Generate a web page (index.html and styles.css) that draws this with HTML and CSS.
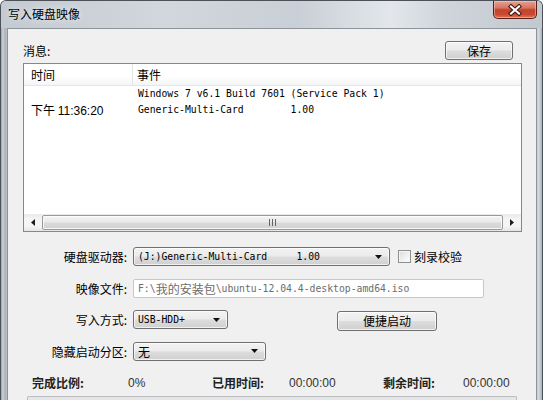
FILE: index.html
```html
<!DOCTYPE html>
<html lang="zh-CN">
<head>
<meta charset="UTF-8" />
<meta name="viewport" content="width=device-width, initial-scale=1" />
<title>写入硬盘映像</title>
<link rel="stylesheet" href="styles.css">
</head>
<body>
<div class="window">
  <div class="titlebar">
    <span class="title">写入硬盘映像</span>
    <div class="close-btn">
      <svg width="16" height="12" viewBox="0 0 16 12">
        <path d="M4 2.5 L12 9.5 M12 2.5 L4 9.5" stroke="#3c1610" stroke-width="4.2" stroke-linecap="square"/>
        <path d="M4 2.5 L12 9.5 M12 2.5 L4 9.5" stroke="#ffffff" stroke-width="2.2" stroke-linecap="square"/>
      </svg>
    </div>
  </div>

  <div class="client">
    <div class="msg-head">
      <span class="label">消息:</span>
      <button class="btn btn-save">保存</button>
    </div>

    <div class="list">
      <div class="list-head">
        <div class="col-time">时间</div>
        <div class="col-event">事件</div>
      </div>
      <div class="list-body">
        <div class="row">
          <div class="col-time"></div>
          <div class="col-event mono">Windows 7 v6.1 Build 7601 (Service Pack 1)</div>
        </div>
        <div class="row">
          <div class="col-time">下午 <span class="time">11:36:20</span></div>
          <div class="col-event mono">Generic-Multi-Card        1.00</div>
        </div>
      </div>
      <div class="hscroll">
        <div class="sb-arrow">
          <svg width="4" height="7" viewBox="0 0 4 7"><path d="M4 0 L0 3.5 L4 7 Z" fill="#1e1e1e"/></svg>
        </div>
        <div class="sb-thumb">
          <svg width="7" height="7" viewBox="0 0 7 7">
            <path d="M0.5 0 V7 M3.5 0 V7 M6.5 0 V7" stroke="#5f6468" stroke-width="1"/>
          </svg>
        </div>
        <div class="sb-arrow">
          <svg width="4" height="7" viewBox="0 0 4 7"><path d="M0 0 L4 3.5 L0 7 Z" fill="#1e1e1e"/></svg>
        </div>
      </div>
    </div>

    <div class="form">
      <div class="form-label">硬盘驱动器:</div>
      <div class="form-field">
        <div class="combo combo-drive">
          <span class="mono combo-text">(J:)Generic-Multi-Card     1.00</span>
          <svg class="combo-arrow" width="7" height="4" viewBox="0 0 7 4"><path d="M0 0 H7 L3.5 4 Z" fill="#111"/></svg>
        </div>
        <span class="checkbox"></span>
        <span class="check-label">刻录校验</span>
      </div>

      <div class="form-label">映像文件:</div>
      <div class="form-field">
        <div class="textbox"><span class="mono">F:\</span><span class="zh">我的安装包</span><span class="mono">\ubuntu-12.04.4-desktop-amd64.iso</span></div>
      </div>

      <div class="form-label">写入方式:</div>
      <div class="form-field">
        <div class="combo combo-mode">
          <span class="mono combo-text">USB-HDD+</span>
          <svg class="combo-arrow" width="7" height="4" viewBox="0 0 7 4"><path d="M0 0 H7 L3.5 4 Z" fill="#111"/></svg>
        </div>
        <button class="btn btn-quick">便捷启动</button>
      </div>

      <div class="form-label">隐藏启动分区:</div>
      <div class="form-field">
        <div class="combo combo-hide">
          <span class="zh combo-text">无</span>
          <svg class="combo-arrow" width="7" height="4" viewBox="0 0 7 4"><path d="M0 0 H7 L3.5 4 Z" fill="#111"/></svg>
        </div>
      </div>
    </div>

    <div class="stats">
      <span class="stat-label">完成比例:</span>
      <span class="stat-value">0%</span>
      <span class="stat-label">已用时间:</span>
      <span class="stat-value">00:00:00</span>
      <span class="stat-label">剩余时间:</span>
      <span class="stat-value">00:00:00</span>
    </div>

    <div class="progress"></div>
  </div>
</div>
</body>
</html>
```

FILE: styles.css
```css
:root {
  --frame-color: #c3cad2;
  --client-bg: #f0f0f0;
  --border-dark: #707070;
  --text-color: #000000;
  --zh-font: "Noto Sans CJK SC", "Noto Sans", sans-serif;
  --mono-font: "DejaVu Sans Mono", "Liberation Mono", monospace;
}
* {
  box-sizing: border-box;
}
body {
  margin: 0;
  width: 543px;
  height: 400px;
  overflow: hidden;
  background: #ffffff;
  font-family: var(--zh-font);
  font-size: 12px;
  color: var(--text-color);
}
.zh {
  font-family: var(--zh-font);
  font-size: 12px;
}
.mono {
  font-family: var(--mono-font);
  font-size: 9.75px;
  white-space: pre;
}
.time {
  font-family: "Liberation Sans", Arial, sans-serif;
  font-size: 12px;
}

/* window frame */
.window {
  height: 400px;
  display: flex;
  flex-direction: column;
  border: 1px solid #4b5157;
  border-bottom: none;
  border-radius: 6px 6px 0 0;
  background: linear-gradient(to right, #9ea5ad 0, #cdd3da 2px, #a9b0b8 4px, #bcc3cb 6px, var(--frame-color) 7px, var(--frame-color) calc(100% - 6px), #d3d8de calc(100% - 3px), #a9b0b8 100%);
  overflow: hidden;
}
.titlebar {
  height: 27px;
  flex: none;
  display: flex;
  align-items: flex-start;
  padding-left: 7px;
  background: linear-gradient(to right, #c4cad1 0%, #d2d7dd 30%, #c9cfd6 55%, #e3e7eb 72%, #d0d5db 82%, #c2c8cf 100%);
}
.title {
  line-height: 26px;
  font-size: 12px;
  text-shadow: 0 0 6px rgba(255, 255, 255, 0.9);
}
.close-btn {
  margin-left: auto;
  margin-right: 5px;
  width: 44px;
  height: 18px;
  display: flex;
  align-items: center;
  justify-content: center;
  border: 1px solid #5e1d14;
  border-top: none;
  border-radius: 0 0 5px 5px;
  background: linear-gradient(#e6a193 0%, #d77561 40%, #c3442c 52%, #c94a31 80%, #dc7a5c 100%);
  box-shadow: inset 0 0 0 1px rgba(255, 220, 210, 0.45);
}

/* client area */
.client {
  flex: 1;
  min-height: 0;
  display: flex;
  flex-direction: column;
  margin: 0 5px 0 6px;
  padding: 12px 14px 0 15px;
  border: 1px solid #8d949b;
  border-bottom: none;
  background: var(--client-bg);
  overflow: hidden;
}
.msg-head {
  height: 19px;
  flex: none;
  display: flex;
  align-items: center;
  justify-content: space-between;
}
.label {
  line-height: 18px;
}
.btn {
  font-family: var(--zh-font);
  font-size: 12px;
  color: var(--text-color);
  padding: 0;
  border: 1px solid var(--border-dark);
  border-radius: 3px;
  background: linear-gradient(#f3f3f3 0%, #ebebeb 48%, #dddddd 52%, #cfcfcf 100%);
  box-shadow: inset 0 0 0 1px rgba(255, 255, 255, 0.7);
  line-height: 16px;
}
.btn-save {
  width: 68px;
  height: 19px;
  margin-right: 9px;
}

/* message list */
.list {
  margin-top: 3px;
  height: 169px;
  flex: none;
  display: flex;
  flex-direction: column;
  border: 1px solid #828790;
  background: #ffffff;
}
.list-head {
  height: 22px;
  flex: none;
  display: flex;
  border-bottom: 1px solid #e3e5e8;
  background: linear-gradient(#ffffff 0%, #ffffff 60%, #f4f5f6 100%);
  line-height: 21px;
}
.list-head .col-time {
  border-right: 1px solid #e3e5e8;
}
.col-time {
  width: 109px;
  flex: none;
  padding-left: 7px;
}
.col-event {
  padding-left: 4px;
}
.list-body {
  flex: 1;
}
.row {
  height: 16px;
  display: flex;
  align-items: center;
  line-height: 16px;
}
.row .col-event {
  padding-left: 5px;
}
.hscroll {
  height: 17px;
  flex: none;
  display: flex;
  align-items: stretch;
  padding: 1px 0;
  background: linear-gradient(#e9e9e9, #f5f5f5 30%, #f5f5f5 70%, #e6e6e6);
}
.sb-arrow {
  width: 18px;
  display: flex;
  align-items: center;
  justify-content: center;
}
.sb-thumb {
  flex: 1;
  display: flex;
  align-items: center;
  justify-content: center;
  border: 1px solid #989898;
  border-radius: 2px;
  background: linear-gradient(#f2f2f2 0%, #eaeaea 45%, #dadada 55%, #d2d2d2 100%);
  box-shadow: inset 0 0 0 1px rgba(255, 255, 255, 0.8);
}

/* form */
.form {
  margin-top: 15px;
  flex: none;
  display: grid;
  grid-template-columns: 104px auto;
  grid-auto-rows: 19px;
  column-gap: 6px;
  row-gap: 12.5px;
}
.form-label {
  text-align: right;
  line-height: 19px;
}
.form-field {
  display: flex;
  align-items: center;
}
.combo {
  height: 19px;
  display: flex;
  align-items: center;
  padding: 0 7px 0 4px;
  border: 1px solid var(--border-dark);
  border-radius: 3px;
  background: linear-gradient(#f3f3f3 0%, #ebebeb 48%, #dddddd 52%, #d0d0d0 100%);
  box-shadow: inset 0 0 0 1px rgba(255, 255, 255, 0.7);
}
.combo-text {
  flex: 1;
  line-height: 17px;
}
.combo-drive {
  width: 257px;
}
.combo-mode {
  width: 95px;
}
.combo-hide {
  width: 133px;
}
.checkbox {
  width: 13px;
  height: 13px;
  margin-left: 8px;
  border: 1px solid #8e8f8f;
  background: linear-gradient(135deg, #dcdcdc, #ffffff);
  box-shadow: inset 0 0 0 1px #f4f4f4;
}
.check-label {
  margin-left: 3px;
}
.textbox {
  width: 351px;
  height: 19px;
  display: flex;
  align-items: center;
  padding-left: 4px;
  border: 1px solid #c5c8cc;
  border-radius: 2px;
  background: #ffffff;
  color: #6d6d6d;
}
.btn-quick {
  width: 100px;
  height: 20px;
  margin-left: 109px;
  margin-top: 2px;
}

/* stats */
.stats {
  margin-top: 15px;
  padding-left: 9px;
  flex: none;
  height: 14px;
  display: grid;
  grid-template-columns: 96px 84px 77px 94px 80px auto;
  line-height: 14px;
}
.stat-label {
  font-weight: 700;
  color: #222;
}
.stat-value {
  font-family: "Liberation Sans", Arial, sans-serif;
  font-size: 12px;
  color: #333;
}
.progress {
  margin: 6px 5px 0 4px;
  height: 16px;
  flex: none;
  border: 1px solid #b9bcc0;
  border-bottom: none;
  border-radius: 2px 2px 0 0;
  background: #e6e6e6;
}
```
